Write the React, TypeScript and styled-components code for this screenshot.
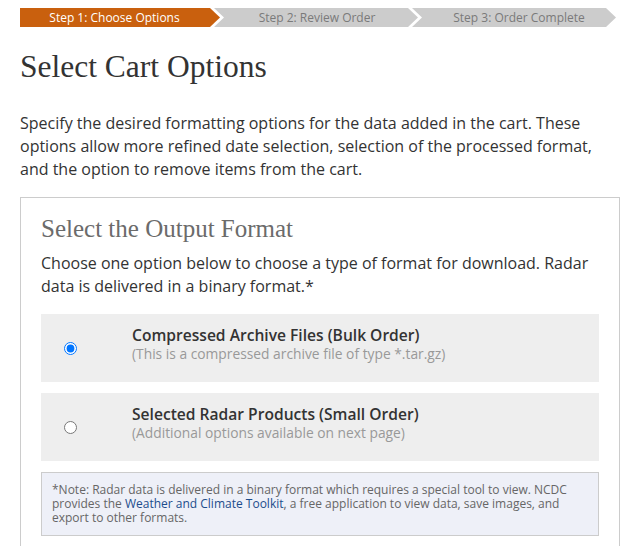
import React from "react";
import styled, { createGlobalStyle } from "styled-components";

const Global = createGlobalStyle`
  html, body { margin: 0; padding: 0; background: #fff; }
  body { font-family: "Open Sans", "Liberation Sans", sans-serif; color: #333; }
`;

const Page = styled.div`
  width: 600px;
  margin-left: 20px;
  padding-top: 8px;
`;

const Steps = styled.div`
  display: flex;
  height: 19px;
`;

const Step = styled.div<{ $active?: boolean; $first?: boolean; $shift: number }>`
  flex: 0 0 ${(p) => (p.$first ? 200 : 204)}px;
  margin-left: ${(p) => (p.$first ? 0 : -6)}px;
  height: 19px;
  background: ${(p) => (p.$active ? "#c9600e" : "#cccccc")};
  color: ${(p) => (p.$active ? "#ffffff" : "#7a7a7a")};
  font-size: 12px;
  line-height: 19px;
  text-align: center;
  padding-left: ${(p) => Math.max(p.$shift, 0)}px;
  padding-right: ${(p) => Math.max(-p.$shift, 0)}px;
  box-sizing: border-box;
  clip-path: ${(p) =>
    p.$first
      ? "polygon(0 0, calc(100% - 10px) 0, 100% 50%, calc(100% - 10px) 100%, 0 100%)"
      : "polygon(0 0, calc(100% - 10px) 0, 100% 50%, calc(100% - 10px) 100%, 0 100%, 10px 50%)"};
`;

const Title = styled.h1`
  font-family: "Liberation Serif", serif;
  font-weight: normal;
  font-size: 31.5px;
  line-height: 36px;
  color: #333;
  margin: 22px 0 0;
`;

const Intro = styled.p`
  font-size: 16px;
  line-height: 23px;
  margin: 27px 0 0;
  color: #333;
`;

const Box = styled.section`
  margin-top: 16px;
  border: 1px solid #cccccc;
  padding: 16px 20px 40px;
`;

const BoxTitle = styled.h2`
  font-family: "Liberation Serif", serif;
  font-weight: normal;
  font-size: 25px;
  line-height: 30px;
  color: #6b6b6b;
  margin: 0;
`;

const BoxText = styled.p`
  font-size: 16px;
  line-height: 23px;
  margin: 8px 0 0;
  color: #333;
`;

const Options = styled.div`
  display: flex;
  flex-direction: column;
  gap: 11px;
  margin-top: 16px;
`;

const Option = styled.label`
  display: flex;
  align-items: center;
  height: 68px;
  background: #eeeeee;
  box-sizing: border-box;
  cursor: pointer;
`;

const Radio = styled.input`
  width: 13px;
  height: 13px;
  margin: 0 0 0 23px;
  flex: none;
`;

const OptionText = styled.div`
  margin-left: 55px;
  margin-top: -8px;
  display: flex;
  flex-direction: column;
`;

const OptionTitle = styled.span`
  font-size: 15.6px;
  font-weight: 600;
  line-height: 20px;
  color: #333;
`;

const OptionSub = styled.span`
  font-size: 13.8px;
  line-height: 18px;
  color: #999;
`;

const Note = styled.div`
  margin-top: 11px;
  background: #eef0f8;
  border: 1px solid #cccccc;
  padding: 10px 10px 10px;
  font-size: 12px;
  line-height: 14px;
  color: #666;
`;

const Link = styled.a`
  color: #1c4d8c;
  text-decoration: none;
`;

export default function App() {
  return (
    <>
      <Global />
      <Page>
        <Steps>
          <Step $active $first $shift={-11}>Step 1: Choose Options</Step>
          <Step $shift={2}>Step 2: Review Order</Step>
          <Step $shift={10}>Step 3: Order Complete</Step>
        </Steps>
        <Title>Select Cart Options</Title>
        <Intro>
          Specify the desired formatting options for the data added in the cart. These
          options allow more refined date selection, selection of the processed format,
          and the option to remove items from the cart.
        </Intro>
        <Box>
          <BoxTitle>Select the Output Format</BoxTitle>
          <BoxText>
            Choose one option below to choose a type of format for download. Radar data is
            delivered in a binary format.*
          </BoxText>
          <Options>
            <Option>
              <Radio type="radio" name="fmt" defaultChecked />
              <OptionText>
                <OptionTitle>Compressed Archive Files (Bulk Order)</OptionTitle>
                <OptionSub>(This is a compressed archive file of type *.tar.gz)</OptionSub>
              </OptionText>
            </Option>
            <Option>
              <Radio type="radio" name="fmt" />
              <OptionText>
                <OptionTitle>Selected Radar Products (Small Order)</OptionTitle>
                <OptionSub>(Additional options available on next page)</OptionSub>
              </OptionText>
            </Option>
          </Options>
          <Note>
            *Note: Radar data is delivered in a binary format which requires a special tool to
            view. NCDC provides the <Link href="#">Weather and Climate Toolkit</Link>, a free
            application to view data, save images, and export to other formats.
          </Note>
        </Box>
      </Page>
    </>
  );
}
